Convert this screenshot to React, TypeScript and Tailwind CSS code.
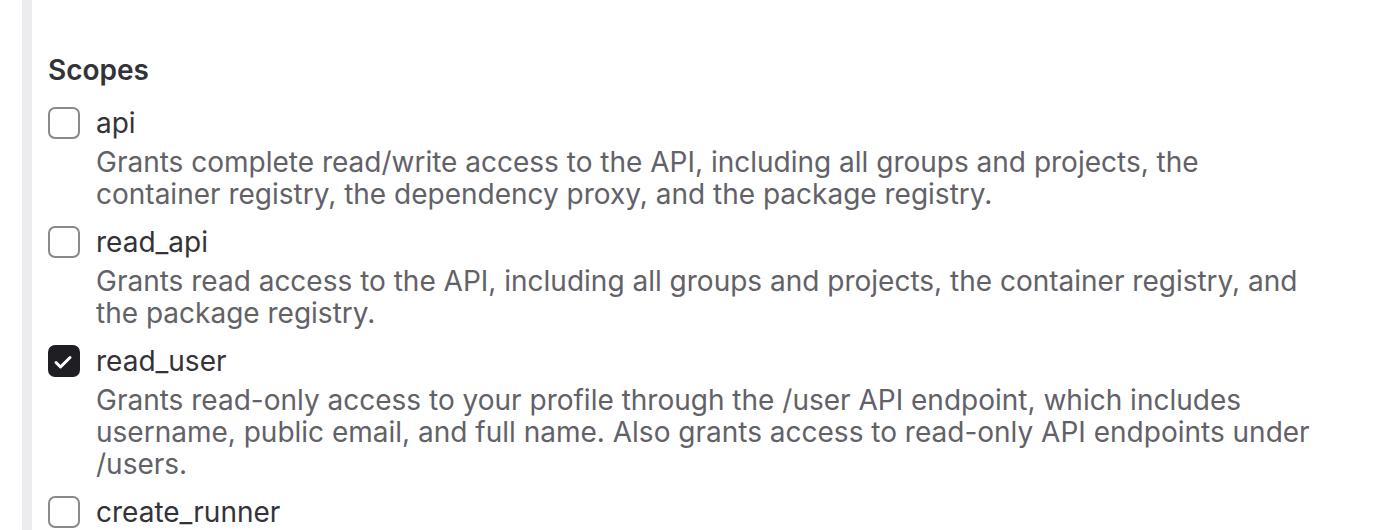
import React from "react";

const items = [
  { name: "api", checked: false, desc: ["Grants complete read/write access to the API, including all groups and projects, the", "container registry, the dependency proxy, and the package registry."] },
  { name: "read_api", checked: false, desc: ["Grants read access to the API, including all groups and projects, the container registry, and", "the package registry."] },
  { name: "read_user", checked: true, desc: ["Grants read-only access to your profile through the /user API endpoint, which includes", "username, public email, and full name. Also grants access to read-only API endpoints under", "/users."] },
  { name: "create_runner", checked: false, desc: [] },
];

function Box({ checked }: { checked: boolean }) {
  if (checked) {
    return (
      <div className="w-[32px] h-[32px] rounded-[7px] bg-[#1f1e24] shrink-0">
        <svg width="32" height="32" viewBox="0 0 32 32" fill="none">
          <path d="M8 17.5 L12.5 22 L22 12.5" stroke="white" strokeWidth="3" strokeLinecap="round" strokeLinejoin="round" />
        </svg>
      </div>
    );
  }
  return <div className="w-[32px] h-[32px] rounded-[7px] border-2 border-[#89888d] bg-white shrink-0" />;
}

export default function App() {
  return (
    <div className="w-[1376px] h-[530px] overflow-hidden bg-white flex" style={{ fontFamily: "Inter, 'Noto Sans', sans-serif" }}>
      <div className="w-[22px] shrink-0" />
      <div className="w-[10px] shrink-0 bg-[#ececef]" />
      <div className="pl-[16px] pt-[54px] flex flex-col">
        <div className="text-[28px] leading-[32px] font-semibold text-[#333238]">Scopes</div>
        <div className="mt-[21px] flex flex-col gap-[16px]">
          {items.map((it) => (
            <div key={it.name} className="flex gap-[16px]">
              <Box checked={it.checked} />
              <div className="flex flex-col">
                <div className="text-[28px] leading-[32px] text-[#333238]">{it.name}</div>
                {it.desc.length > 0 && (
                  <div className="mt-[7px] text-[28px] leading-[32px] text-[#626168]">
                    {it.desc.map((d, i) => (
                      <div key={i} className="whitespace-nowrap">{d}</div>
                    ))}
                  </div>
                )}
              </div>
            </div>
          ))}
        </div>
      </div>
    </div>
  );
}
